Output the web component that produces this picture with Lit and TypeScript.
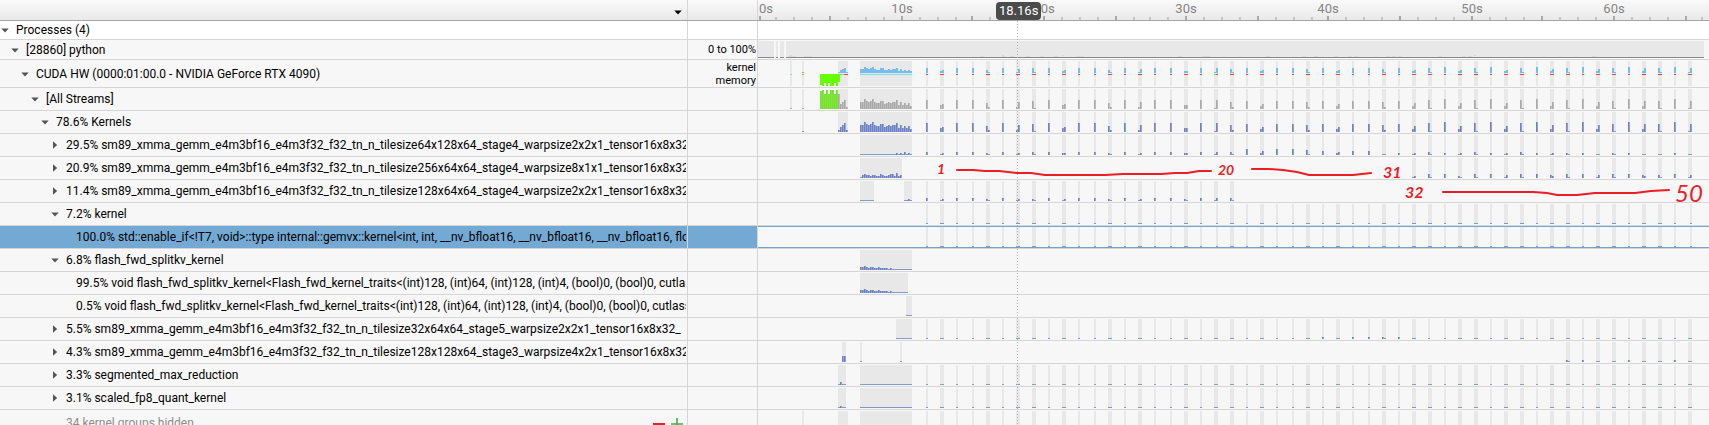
import { LitElement, html, css, svg, nothing } from "lit";
import { customElement, property } from "lit/decorators.js";
import { classMap } from "lit/directives/class-map.js";

type Run = { x: number; h: number[] };
type Row = {
  label: string;
  depth: number;
  open?: boolean;
  size: "head" | "util" | "device" | "stream" | "normal" | "summary";
  side?: string[];
  chart?: string;
  runs?: Run[];
  selected?: boolean;
  muted?: boolean;
};

// Iterations of the decode loop: column start and bucket heights (buckets are 2px wide).
const STARTS = [168, 182, 198, 214, 228, 244, 258, 274, 290, 304, 320, 336, 350, 366, 380, 396, 412, 426, 442, 456, 472, 488, 502, 518, 534, 548, 564, 578, 594, 610, 624, 640, 654, 670, 686, 700, 716, 732, 746, 762, 778, 792, 808, 824, 838, 854, 870, 884, 900, 916, 930];

const WIDE = "9 45 9 9 62 9 27 81 9 45 9 9 62 9 27 9 9 44 9 19 72 8 35 8 8 72 8 35 8 8 72 8 36 91 a 36 91 a 36 91 a 37 91 a 37 81 a 38 81 a 18".split(" ");
const GEMM64 = "3 12 3 3 21 3 12 31 3 22 3 3 21 3 12 3 3 22 3 13 31 6 24 6 6 51 4 23 4 4 11 2 12 31 2 12 31 2 12 31 2 12 21 2 11 21 2 11 11 2 11".split(" ");
const GEMM256 = "12 41 4 21 41 4 13 41 4 32 41 4 13 41 4 32 31 4 13".split(" ");
const GEMM128 = "3 12 3 3 21 3 12 21 3 12 3 3 21 3 12 3 3 21 3 13 31".split(" ");

const digits = (s: string) => [...s].map((c) => parseInt(c, 16));
const place = (items: string[], from = 0): Run[] => items.map((s, i) => ({ x: STARTS[from + i], h: digits(s) }));
const flat = (n: number) => Array<number>(n).fill(1);
const ones = WIDE.map((s) => "1".repeat(s.length));
const thin: Run[] = place(ones).map((r) => (r.x === 456 || r.x === 930 ? { x: r.x + 2, h: [1] } : r));

const PREFILL = digits("77a878a7668856767794746463");
const FLASH = digits("33432332232222121111111111");
const kernelRuns: Run[] = [{ x: 44, h: [1] }, { x: 80, h: [2, 5, 7, 9, 2] }, { x: 102, h: PREFILL }, ...place(WIDE)];

const gemm32 = [...ones];
[26, 28, 29, 31].forEach((i) => (gemm32[i] = "2"));
gemm32[30] = "21";
gemm32[33] = "1";

const SM = "sm89_xmma_gemm_e4m3bf16_e4m3f32_f32_tn_n_tilesize";
const FL = "void flash_fwd_splitkv_kernel<Flash_fwd_kernel_traits<(int)128, (int)64, (int)128, (int)4, (bool)0, (bool)0, cutlass::bfloat16_t";

const ROWS: Row[] = [
  { label: "Processes (4)", depth: 0, open: true, size: "head" },
  { label: "[28860] python", depth: 1, open: true, size: "util", side: ["0 to 100%"], chart: "util" },
  { label: "CUDA HW (0000:01:00.0 - NVIDIA GeForce RTX 4090)", depth: 2, open: true, size: "device", side: ["kernel", "memory"], chart: "device" },
  { label: "[All Streams]", depth: 3, open: true, size: "stream", chart: "streams" },
  { label: "78.6% Kernels", depth: 4, open: true, size: "normal", chart: "bars", runs: kernelRuns },
  { label: `29.5% ${SM}64x128x64_stage4_warpsize2x2x1_tensor16x8x32`, depth: 5, open: false, size: "normal", chart: "bars", runs: [{ x: 102, h: digits("11111111111111111121213121") }, ...place(GEMM64)] },
  { label: `20.9% ${SM}256x64x64_stage4_warpsize8x1x1_tensor16x8x32`, depth: 5, open: false, size: "normal", chart: "bars", runs: [{ x: 102, h: digits("134332332243223442523") }, ...place(GEMM256, 32)] },
  { label: `11.4% ${SM}128x64x64_stage4_warpsize2x2x1_tensor16x8x32`, depth: 5, open: false, size: "normal", chart: "bars", runs: [{ x: 102, h: flat(7) }, { x: 146, h: [1, 1, 2, 1] }, ...place(GEMM128)] },
  { label: "7.2% kernel", depth: 5, open: true, size: "normal", chart: "bars", runs: thin },
  { label: "100.0% std::enable_if<!T7, void>::type internal::gemvx::kernel<int, int, __nv_bfloat16, __nv_bfloat16, __nv_bfloat16, float", depth: 6, size: "normal", chart: "bars", runs: thin, selected: true },
  { label: "6.8% flash_fwd_splitkv_kernel", depth: 5, open: true, size: "normal", chart: "bars", runs: [{ x: 102, h: FLASH }] },
  { label: `99.5% ${FL}`, depth: 6, size: "normal", chart: "bars", runs: [{ x: 102, h: FLASH.slice(0, 24) }] },
  { label: `0.5% ${FL}`, depth: 6, size: "normal", chart: "bars", runs: [{ x: 148, h: flat(3) }] },
  { label: `5.5% ${SM}32x64x64_stage5_warpsize2x2x1_tensor16x8x32_`, depth: 5, open: false, size: "normal", chart: "bars", runs: [{ x: 138, h: flat(8) }, ...place(gemm32)] },
  { label: `4.3% ${SM}128x128x64_stage3_warpsize4x2x1_tensor16x8x32`, depth: 5, open: false, size: "normal", chart: "bars", runs: [{ x: 84, h: [6, 6] }, { x: 102, h: [1] }, { x: 142, h: [1] }, ...place("21 2 11 11 2 11 11 2 11".split(" "), 42)] },
  { label: "3.3% segmented_max_reduction", depth: 5, open: false, size: "normal", chart: "bars", runs: [{ x: 80, h: [1, 3, 1, 1] }, { x: 102, h: flat(26) }, ...place(ones)] },
  { label: "3.1% scaled_fp8_quant_kernel", depth: 5, open: false, size: "normal", chart: "bars", runs: [{ x: 80, h: [1, 2, 1, 1] }, { x: 102, h: flat(26) }, ...place(ones)] },
  { label: "34 kernel groups hidden", depth: 5, size: "summary", chart: "bars", runs: kernelRuns.map((r) => ({ x: r.x, h: r.h.map(() => 0) })), muted: true },
];

@customElement("trace-chart")
class TraceChart extends LitElement {
  @property() kind = "bars";
  @property({ attribute: false }) runs: Run[] = [];

  static styles = css`
    :host { display: block; min-height: 0; overflow: hidden; }
    svg { display: block; width: 100%; height: 100%; shape-rendering: crispEdges; }
    .shade { fill: #e8e8e8; }
    .lo { fill: #6f82bd; }
    .hi { fill: #8da2da; }
    .one { fill: #7f9ad3; }
    .glo { fill: #a9a9a9; }
    .ghi { fill: #bcbcbc; }
    .sky { fill: #74bcf2; }
    .cyan { fill: #80dfe3; }
    .green { fill: #66ff00; }
    .red { fill: #ff4040; }
    .vlo { fill: #6fe81c; }
    .vhi { fill: #8cdc50; }
    .base { fill: #8a8a8a; }
    .bump { fill: #d8d8d8; }
  `;

  private rect(x: number, y: number, w: number, h: number, cls: string) {
    return svg`<rect x=${x} y=${y} width=${w} height=${h} class=${cls}></rect>`;
  }

  private shades(runs: Run[], h: number) {
    return runs.map((r) => this.rect(r.x, 1, r.h.length * 2, h, "shade"));
  }

  private bars(runs: Run[], bottom: number, lo: string, hi: string, one: string) {
    return runs.map((r) =>
      r.h.map((h, i) =>
        h === 1
          ? this.rect(r.x + i * 2, bottom - 1, 2, 1, one)
          : [this.rect(r.x + i * 2, bottom - h, 1, h, lo), this.rect(r.x + i * 2 + 1, bottom - h, 1, h, hi)]
      )
    );
  }

  private util() {
    const spans = [[0, 16], [18, 2], [22, 4], [28, 918]];
    const bumps = [30, 34, 46, 50, 222, 244, 252, 268, 282, 296, 318, 322, 420, 444, 448, 508, 544, 556, 576, 590, 596, 628, 634, 640, 680, 704, 710, 834];
    return [
      spans.map(([x, w]) => this.rect(x, 1, w, 16, "shade")),
      bumps.map((x) => this.rect(x, 16, 4, 1, "bump")),
      [32, 244, 304, 716].map((x) => this.rect(x, 15, 2, 1, "bump")),
      spans.map(([x, w]) => this.rect(x, 17, w, 1, "base")),
    ];
  }

  private device() {
    const small = kernelRuns.map((r) => ({ x: r.x, h: r.h.map((h) => Math.max(1, Math.round(h * 0.57))) }));
    return [
      this.shades([{ x: 32, h: [1] }, ...kernelRuns], 25),
      this.bars(small, 13, "sky", "sky", "sky"),
      [11, 12, 9, 12, 9, 12, 12, 9, 12, 8].map((h, i) => this.rect(62 + i * 2, 14, 2, h, "green")),
      this.rect(32, 14, 2, 1, "cyan"),
      this.rect(44, 14, 2, 1, "green"),
      this.rect(82, 14, 2, 1, "green"),
      this.rect(84, 14, 2, 1, "cyan"),
      this.rect(86, 14, 4, 1, "red"),
      this.rect(102, 14, 52, 1, "cyan"),
      place(WIDE).map((r) => this.rect(r.x, 14, r.h.length * 2, 1, "red")),
      this.rect(456, 14, 2, 1, "green"),
    ];
  }

  private streams() {
    const runs = kernelRuns.map((r) => (r.x === 80 ? { x: 80, h: [15, 5, 7, 9, 2] } : r));
    return [
      this.shades([{ x: 32, h: [1] }, ...runs], 20),
      this.bars([{ x: 32, h: [1] }, ...runs], 21, "glo", "ghi", "glo"),
      this.bars([{ x: 62, h: [18, 19, 15, 19, 15, 19, 19, 15, 19] }], 21, "vlo", "vhi", "vlo"),
    ];
  }

  render() {
    const body =
      this.kind === "util" ? this.util()
      : this.kind === "device" ? this.device()
      : this.kind === "streams" ? this.streams()
      : [this.shades(this.runs, 20), this.bars(this.runs, 21, "lo", "hi", "one")];
    return html`<svg aria-hidden="true">${body}</svg>`;
  }
}

@customElement("time-ruler")
class TimeRuler extends LitElement {
  static styles = css`
    :host { display: block; height: 20px; overflow: hidden; }
    svg { display: block; width: 100%; height: 20px; }
    text { font: 13px Roboto, sans-serif; fill: #858585; text-anchor: middle; }
    .first { text-anchor: start; }
    .minor { fill: #c4c4c4; }
    .major { fill: #a8a8a8; }
  `;
  render() {
    const ticks = Array.from({ length: 80 }, (_, k) => ({ k, x: 1 + 2 * Math.floor((0.15 + 17.805 * k) / 2) }));
    return html`<svg role="img" aria-label="Time ruler in seconds">
      ${ticks.map(({ k, x }) => svg`
        <rect class=${k % 4 ? "minor" : "major"} x=${x} y=${k % 4 ? 17 : 16} width="2" height=${k % 4 ? 3 : 4}></rect>
        ${k % 8 ? nothing : svg`<text class=${k ? "" : "first"} x=${k ? x + 1 : 1} y="13">${(k / 8) * 10}s</text>`}`)}
    </svg>`;
  }
}

@customElement("app-root")
class AppRoot extends LitElement {
  static styles = css`
    :host {
      display: block;
      position: relative;
      height: 100vh;
      overflow: hidden;
      background: #f7f7f7;
      color: #000;
      font: 12px/16px Roboto, sans-serif;
    }
    .row {
      display: grid;
      grid-template-columns: 688px 70px minmax(0, 1fr);
      grid-template-rows: minmax(0, 1fr);
      border-bottom: 1px solid #d6d6d6;
    }
    .top {
      height: 20px;
      background: linear-gradient(#fafafa, #e9e9e9);
      border-bottom-color: #a6a6a6;
    }
    .head { height: 18px; background: #fff; }
    .util { height: 19px; }
    .device { height: 27px; }
    .stream { height: 22px; }
    .normal { height: 22px; }
    .summary { height: 26px; }
    .name, .side { border-right: 1px solid #d6d6d6; min-width: 0; }
    .name { display: flex; align-items: center; padding-right: 1px; overflow: hidden; }
    .top .name { justify-content: flex-end; padding-right: 4px; }
    .indent { flex: none; width: calc(var(--depth) * 10px); }
    .label { flex: 1; min-width: 0; overflow: hidden; white-space: nowrap; }
    .side {
      display: flex;
      flex-direction: column;
      justify-content: center;
      text-align: right;
      font-size: 11px;
      line-height: 13px;
      padding-right: 1px;
    }
    button { flex: none; border: 0; padding: 0; background: none; display: block; height: 10px; }
    .toggle { width: 10px; margin-right: 6px; }
    .spacer { flex: none; width: 16px; }
    .menu { width: 10px; margin-top: 4px; }
    .tool { width: 12px; height: 12px; margin-right: 6px; }
    .tool + .tool { margin-right: 3px; }
    button svg { display: block; width: 100%; height: 100%; }
    .arrow { fill: #555; }
    .menu .arrow { fill: #000; }
    .selected .name, .selected .side { background: #74a9d4; }
    .selected .track { box-shadow: inset 0 1px #6cabd9, inset 0 -1px #74a3d0; }
    .muted .label { color: #8e8e8e; }
    .overlay { position: absolute; inset: 0 0 0 758px; overflow: hidden; pointer-events: none; }
    .overlay svg { display: block; width: 100%; height: 100%; }
    .cursor { stroke: #b2b2b2; stroke-dasharray: 1 2; shape-rendering: crispEdges; }
    .pen { fill: none; stroke: #ee1c25; stroke-width: 2; stroke-linecap: round; stroke-linejoin: round; }
    .mark { fill: #ee1c25; font: italic bold 14px Lato, sans-serif; }
    .mid { font-size: 16px; }
    .big { font-size: 24px; font-weight: 400; }
    .time {
      position: absolute;
      left: 238px;
      top: 2px;
      padding: 0 3px;
      font-size: 13px;
      line-height: 18px;
      color: #fff;
      background: #4b4b4b;
      border-radius: 4px;
    }
  `;

  private arrow(open: boolean) {
    return html`<svg viewBox="0 0 10 10" aria-hidden="true">
      <path class="arrow" d=${open ? "M1.3 3.4h7.4L5 7.4z" : "M3 1.3v7.4L7.2 5z"}></path>
    </svg>`;
  }

  private row(r: Row) {
    return html`<div class=${classMap({ row: true, [r.size]: true, selected: !!r.selected, muted: !!r.muted })} role="treeitem" aria-level=${r.depth + 1}>
      <div class="name">
        <span class="indent" style=${`--depth:${r.depth}`}></span>
        ${r.open === undefined
          ? html`<span class="spacer"></span>`
          : html`<button class="toggle" aria-label=${r.open ? "Collapse" : "Expand"} aria-expanded=${r.open ? "true" : "false"}>${this.arrow(r.open)}</button>`}
        <span class="label">${r.label}</span>
        ${r.muted
          ? html`<button class="tool" aria-label="Show fewer"><svg viewBox="0 0 12 12"><path d="M0 7h12" stroke="#e0242b" stroke-width="2"></path></svg></button>
              <button class="tool" aria-label="Show more"><svg viewBox="0 0 12 12"><path d="M0 7h12M6 1v11" stroke="#46ad48" stroke-width="1.6"></path></svg></button>`
          : nothing}
      </div>
      <div class="side">${(r.side ?? []).map((s) => html`<span>${s}</span>`)}</div>
      ${r.chart
        ? html`<trace-chart class="track" .kind=${r.chart} .runs=${r.runs ?? []}></trace-chart>`
        : html`<div class="track"></div>`}
    </div>`;
  }

  render() {
    return html`
      <div class="row top">
        <div class="name"><button class="menu" aria-label="Timeline options">${this.arrow(true)}</button></div>
        <div class="side"></div>
        <time-ruler></time-ruler>
      </div>
      <div role="tree" aria-label="Timeline rows">${ROWS.map((r) => this.row(r))}</div>
      <div class="overlay">
        <svg>
          <path class="cursor" d="M259.5 21V425"></path>
          <path class="pen" d="M199 170h16l12 1h14l18 2h14l14 2h60l18-1h38l14-1h12l12-2h12"></path>
          <path class="pen" d="M494 169h17l14 1l14 2l12 3h44l18-2"></path>
          <path class="pen" d="M685 192h90l14 1l10 2h20l18-2h40l16-2l18-1"></path>
          <text class="mark" x="179" y="174">1</text>
          <text class="mark" x="460" y="175">20</text>
          <text class="mark mid" x="625" y="178">31</text>
          <text class="mark mid" x="647" y="198">32</text>
          <text class="mark big" x="917" y="202">50</text>
        </svg>
        <span class="time">18.16s</span>
      </div>
    `;
  }
}
